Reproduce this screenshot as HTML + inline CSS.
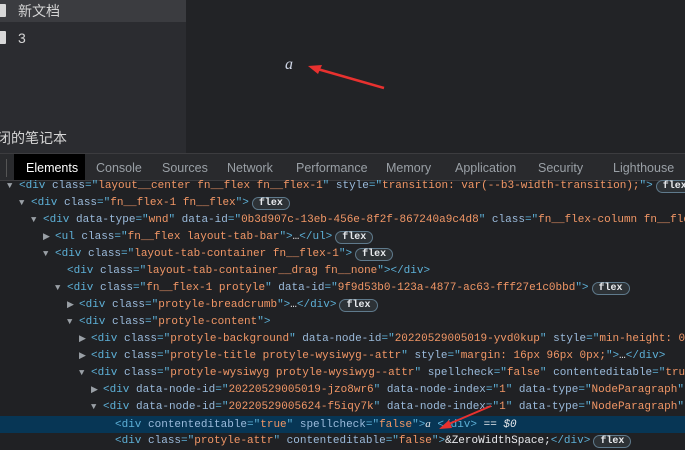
<!DOCTYPE html><html><head><meta charset="utf-8"><style>
*{margin:0;padding:0;box-sizing:border-box}
body{width:685px;height:442px;overflow:hidden;background:#202124;position:relative;font-family:"Liberation Sans","Noto Sans CJK SC",sans-serif}
.side{position:absolute;left:0;top:0;width:186px;height:153px;background:#2b2c30}
.main{position:absolute;left:186px;top:0;width:499px;height:153px;background:#222326}
.row{position:absolute;left:0;width:186px;height:22px;color:#d5d5d5;font-size:14px;line-height:22px}
.doc{position:absolute;left:-4px;top:4px;width:10px;height:13px;background:#d8d8d8;border-radius:1px}
.tabs{position:absolute;left:0;top:153px;width:685px;height:28px;background:#292a2d;border-top:1px solid #3c3c3f;border-bottom:1px solid #3c3c3f;font-size:12.5px;color:#9aa0a6}
.tabs span{position:absolute;top:7px}
.tree{position:absolute;left:0;top:178px;width:685px;font-family:"Liberation Mono",monospace;font-size:11px;color:#e8eaed}
.l{height:17px;line-height:17px;position:relative;white-space:pre;overflow:visible}
.t{color:#5db0d7}.a{color:#9bbbdc}.v{color:#f29766}
.ar{color:#9aa0a6;font-size:9px;display:inline-block;width:12px;margin-left:-12px}
.b{display:inline-block;border:1px solid #5f7a8c;border-radius:8px;padding:0 6px;line-height:11px;font-size:10px;color:#e8eaed;background:#2d3236;font-weight:bold;margin-left:3px}
</style></head><body>
<div class="side">
<div class="row" style="top:0;background:#3b3c40"><div class="doc"></div><span style="position:absolute;left:18px">新文档</span></div>
<div class="row" style="top:27px"><div class="doc"></div><span style="position:absolute;left:18px">3</span></div>
<div class="row" style="top:127px"><span style="position:absolute;left:-3px">闭的笔记本</span></div>
</div>
<div class="main">
<span style="position:absolute;left:99px;top:56px;color:#cfd6e6;font-family:'Liberation Serif',serif;font-style:italic;font-size:16px">a</span>
<svg style="position:absolute;left:120px;top:60px" width="80" height="30"><line x1="78" y1="28" x2="8" y2="8" stroke="#e8312f" stroke-width="2.5"/><polygon points="2,6 16,5 12,14" fill="#e8312f"/></svg>
</div>
<div class="tabs">
<div style="position:absolute;left:6px;top:5px;width:1px;height:18px;background:#555"></div>
<div style="position:absolute;left:14px;top:0;width:71px;height:26px;background:#000"></div>
<span style="left:26px;color:#fff">Elements</span><span style="left:96px">Console</span><span style="left:162px">Sources</span><span style="left:227px">Network</span><span style="left:296px">Performance</span><span style="left:386px">Memory</span><span style="left:455px">Application</span><span style="left:538px">Security</span><span style="left:613px">Lighthouse</span>
</div>
<div class="tree">
<div class="l" style="padding-left:19px"><span class="ar">▼</span><span class="t">&lt;div </span><span class="a">class</span><span class="t">="</span><span class="v">layout__center fn__flex fn__flex-1</span><span class="t">" </span><span class="a">style</span><span class="t">="</span><span class="v">transition: var(--b3-width-transition);</span><span class="t">"&gt;</span><span class="b">flex</span></div>
<div class="l" style="padding-left:31px"><span class="ar">▼</span><span class="t">&lt;div </span><span class="a">class</span><span class="t">="</span><span class="v">fn__flex-1 fn__flex</span><span class="t">"&gt;</span><span class="b">flex</span></div>
<div class="l" style="padding-left:43px"><span class="ar">▼</span><span class="t">&lt;div </span><span class="a">data-type</span><span class="t">="</span><span class="v">wnd</span><span class="t">" </span><span class="a">data-id</span><span class="t">="</span><span class="v">0b3d907c-13eb-456e-8f2f-867240a9c4d8</span><span class="t">" </span><span class="a">class</span><span class="t">="</span><span class="v">fn__flex-column fn__flex</span></div>
<div class="l" style="padding-left:55px"><span class="ar">▶</span><span class="t">&lt;ul </span><span class="a">class</span><span class="t">="</span><span class="v">fn__flex layout-tab-bar</span><span class="t">"&gt;</span>…<span class="t">&lt;/ul&gt;</span><span class="b">flex</span></div>
<div class="l" style="padding-left:55px"><span class="ar">▼</span><span class="t">&lt;div </span><span class="a">class</span><span class="t">="</span><span class="v">layout-tab-container fn__flex-1</span><span class="t">"&gt;</span><span class="b">flex</span></div>
<div class="l" style="padding-left:67px"><span class="t">&lt;div </span><span class="a">class</span><span class="t">="</span><span class="v">layout-tab-container__drag fn__none</span><span class="t">"&gt;&lt;/div&gt;</span></div>
<div class="l" style="padding-left:67px"><span class="ar">▼</span><span class="t">&lt;div </span><span class="a">class</span><span class="t">="</span><span class="v">fn__flex-1 protyle</span><span class="t">" </span><span class="a">data-id</span><span class="t">="</span><span class="v">9f9d53b0-123a-4877-ac63-fff27e1c0bbd</span><span class="t">"&gt;</span><span class="b">flex</span></div>
<div class="l" style="padding-left:79px"><span class="ar">▶</span><span class="t">&lt;div </span><span class="a">class</span><span class="t">="</span><span class="v">protyle-breadcrumb</span><span class="t">"&gt;</span>…<span class="t">&lt;/div&gt;</span><span class="b">flex</span></div>
<div class="l" style="padding-left:79px"><span class="ar">▼</span><span class="t">&lt;div </span><span class="a">class</span><span class="t">="</span><span class="v">protyle-content</span><span class="t">"&gt;</span></div>
<div class="l" style="padding-left:91px"><span class="ar">▶</span><span class="t">&lt;div </span><span class="a">class</span><span class="t">="</span><span class="v">protyle-background</span><span class="t">" </span><span class="a">data-node-id</span><span class="t">="</span><span class="v">20220529005019-yvd0kup</span><span class="t">" </span><span class="a">style</span><span class="t">="</span><span class="v">min-height: 0</span></div>
<div class="l" style="padding-left:91px"><span class="ar">▶</span><span class="t">&lt;div </span><span class="a">class</span><span class="t">="</span><span class="v">protyle-title protyle-wysiwyg--attr</span><span class="t">" </span><span class="a">style</span><span class="t">="</span><span class="v">margin: 16px 96px 0px;</span><span class="t">"&gt;</span>…<span class="t">&lt;/div&gt;</span></div>
<div class="l" style="padding-left:91px"><span class="ar">▼</span><span class="t">&lt;div </span><span class="a">class</span><span class="t">="</span><span class="v">protyle-wysiwyg protyle-wysiwyg--attr</span><span class="t">" </span><span class="a">spellcheck</span><span class="t">="</span><span class="v">false</span><span class="t">" </span><span class="a">contenteditable</span><span class="t">="</span><span class="v">tru</span></div>
<div class="l" style="padding-left:103px"><span class="ar">▶</span><span class="t">&lt;div </span><span class="a">data-node-id</span><span class="t">="</span><span class="v">20220529005019-jzo8wr6</span><span class="t">" </span><span class="a">data-node-index</span><span class="t">="</span><span class="v">1</span><span class="t">" </span><span class="a">data-type</span><span class="t">="</span><span class="v">NodeParagraph</span><span class="t">"</span></div>
<div class="l" style="padding-left:103px"><span class="ar">▼</span><span class="t">&lt;div </span><span class="a">data-node-id</span><span class="t">="</span><span class="v">20220529005624-f5iqy7k</span><span class="t">" </span><span class="a">data-node-index</span><span class="t">="</span><span class="v">1</span><span class="t">" </span><span class="a">data-type</span><span class="t">="</span><span class="v">NodeParagraph</span><span class="t">"</span></div>
<div class="l" style="padding-left:115px;background:#073655"><span class="t">&lt;div </span><span class="a">contenteditable</span><span class="t">="</span><span class="v">true</span><span class="t">" </span><span class="a">spellcheck</span><span class="t">="</span><span class="v">false</span><span class="t">"&gt;</span><i style="font-family:'Liberation Serif',serif">a</i> <span class="t">&lt;/div&gt;</span> == <i>$0</i><svg style="position:absolute;left:436px;top:-12px" width="60" height="30"><line x1="55" y1="2" x2="8" y2="22" stroke="#e8312f" stroke-width="2"/><polygon points="3,25 13,16 16,24" fill="#e8312f"/></svg></div>
<div class="l" style="padding-left:115px"><span class="t">&lt;div </span><span class="a">class</span><span class="t">="</span><span class="v">protyle-attr</span><span class="t">" </span><span class="a">contenteditable</span><span class="t">="</span><span class="v">false</span><span class="t">"&gt;</span>&amp;ZeroWidthSpace;<span class="t">&lt;/div&gt;</span><span class="b">flex</span></div>
</div>
</body></html>
